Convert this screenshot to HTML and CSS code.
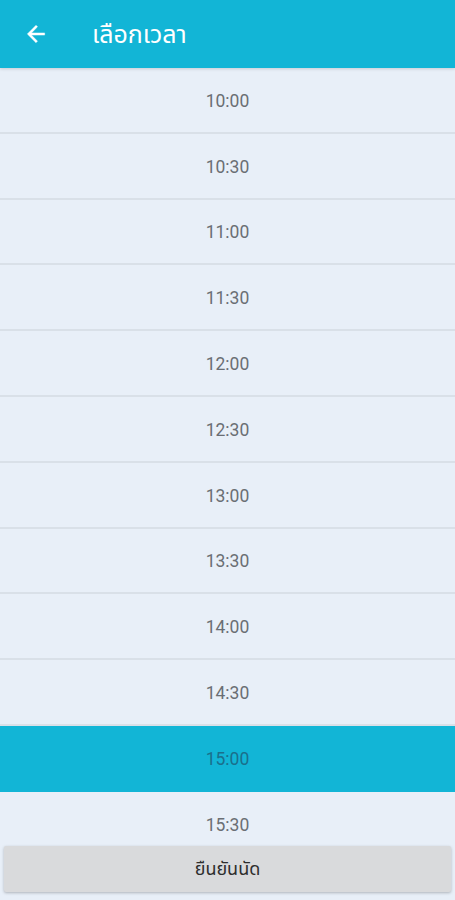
FILE: index.html
```html
<!DOCTYPE html>
<html lang="th">
<head>
<meta charset="utf-8">
<title>เลือกเวลา</title>
<link rel="stylesheet" href="styles.css">
</head>
<body>
<div class="app">
  <header class="bar">
    <svg class="back" width="26" height="26" viewBox="0 0 24 24"><path d="M20 11H7.83l5.59-5.59L12 4l-8 8 8 8 1.41-1.41L7.83 13H20v-2z" fill="#fff" stroke="#fff" stroke-width="0.4"/></svg>
    <h1 class="title">เลือกเวลา</h1>
  </header>
  <div class="list">
    <div class="row">10:00</div>
    <div class="row">10:30</div>
    <div class="row">11:00</div>
    <div class="row">11:30</div>
    <div class="row">12:00</div>
    <div class="row">12:30</div>
    <div class="row">13:00</div>
    <div class="row">13:30</div>
    <div class="row">14:00</div>
    <div class="row">14:30</div>
    <div class="row selected">15:00</div>
    <div class="row">15:30</div>
  </div>
  <footer class="foot">
    <button class="confirm">ยืนยันนัด</button>
  </footer>
</div>
</body>
</html>
```
FILE: styles.css
```css
* { box-sizing: border-box; }
html, body { margin: 0; padding: 0; }
body {
  background: #e8eff8;
  font-family: Roboto, "Noto Sans", "Noto Sans Thai", "Loma", "Garuda", sans-serif;
}
.app {
  height: 900px;
  display: flex;
  flex-direction: column;
  overflow: hidden;
}
.bar {
  height: 68px;
  flex: none;
  background: #12b5d6;
  display: flex;
  align-items: center;
  padding-left: 23px;
  box-shadow: 0 1px 3px rgba(0,0,0,0.15);
  position: relative;
  z-index: 1;
}
.back { flex: none; }
.title {
  margin: 0 0 0 43px;
  color: #fff;
  font-size: 25px;
  font-weight: 400;
  line-height: 1;
}
.list {
  flex: 1;
  overflow: hidden;
  min-height: 0;
}
.row {
  height: 65.8px;
  display: flex;
  align-items: center;
  justify-content: center;
  color: #6a6e74;
  font-size: 17.5px;
  border-bottom: 2px solid #d9e0e8;
  padding-top: 2px;
}
.row.selected {
  background: #12b5d6;
  color: #1a6f8c;
  border-bottom-color: #12b5d6;
}
.foot {
  flex: none;
  padding: 4px 4px 8px;
}
.confirm {
  width: 100%;
  height: 46px;
  border: none;
  border-radius: 2px;
  background: #d9dadc;
  color: #2e2e2e;
  font-family: inherit;
  font-size: 18px;
  box-shadow: 0 1px 3px rgba(0,0,0,0.25);
}
```
